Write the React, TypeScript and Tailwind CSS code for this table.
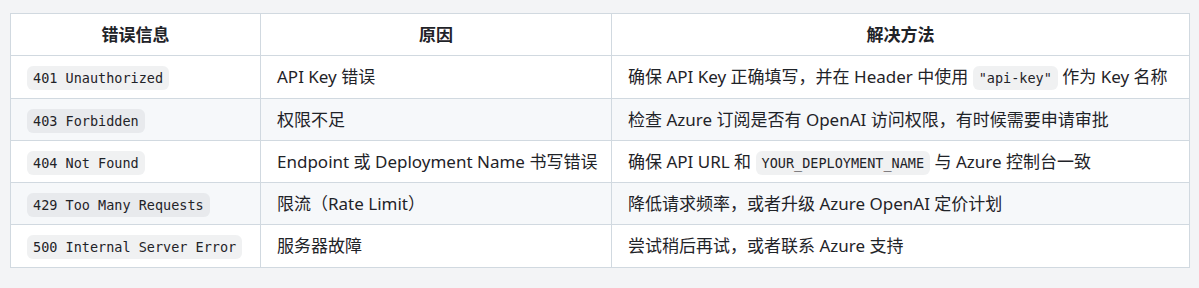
import React from "react";

const rows: { code: string; reason: string; fix: React.ReactNode }[] = [
  {
    code: "401 Unauthorized",
    reason: "API Key 错误",
    fix: (
      <>
        确保 API Key 正确填写，并在 Header 中使用 <Code>"api-key"</Code> 作为 Key 名称
      </>
    ),
  },
  {
    code: "403 Forbidden",
    reason: "权限不足",
    fix: "检查 Azure 订阅是否有 OpenAI 访问权限，有时候需要申请审批",
  },
  {
    code: "404 Not Found",
    reason: "Endpoint 或 Deployment Name 书写错误",
    fix: (
      <>
        确保 API URL 和 <Code>YOUR_DEPLOYMENT_NAME</Code> 与 Azure 控制台一致
      </>
    ),
  },
  {
    code: "429 Too Many Requests",
    reason: "限流（Rate Limit）",
    fix: "降低请求频率，或者升级 Azure OpenAI 定价计划",
  },
  {
    code: "500 Internal Server Error",
    reason: "服务器故障",
    fix: "尝试稍后再试，或者联系 Azure 支持",
  },
];

function Code({ children }: { children: React.ReactNode }) {
  return (
    <code className="rounded-md bg-[#818b981f] px-[6px] py-[4px] font-['DejaVu_Sans_Mono',monospace] text-[13.5px] leading-none">
      {children}
    </code>
  );
}

const cell = "border border-[#d1d9e0] px-4 py-2 leading-[25.3px] whitespace-nowrap";

const App = () => {
  return (
    <div className="min-h-[288px] w-full bg-[#f3f4f6] px-[10px] pt-[13px] font-['Noto_Sans','Noto_Sans_CJK_SC',sans-serif] text-[17px] text-[#1f2328]">
      <table className="w-[1180px] table-fixed border-collapse">
        <thead>
          <tr className="bg-white">
            <th className={`w-[250px] text-center font-bold ${cell}`}>错误信息</th>
            <th className={`w-[351px] text-center font-bold ${cell}`}>原因</th>
            <th className={`text-center font-bold ${cell}`}>解决方法</th>
          </tr>
        </thead>
        <tbody>
          {rows.map((r, i) => (
            <tr key={r.code} className={i % 2 === 1 ? "bg-[#f6f8fa]" : "bg-white"}>
              <td className={cell}>
                <Code>{r.code}</Code>
              </td>
              <td className={cell}>{r.reason}</td>
              <td className={cell}>{r.fix}</td>
            </tr>
          ))}
        </tbody>
      </table>
    </div>
  );
};

export default App;
